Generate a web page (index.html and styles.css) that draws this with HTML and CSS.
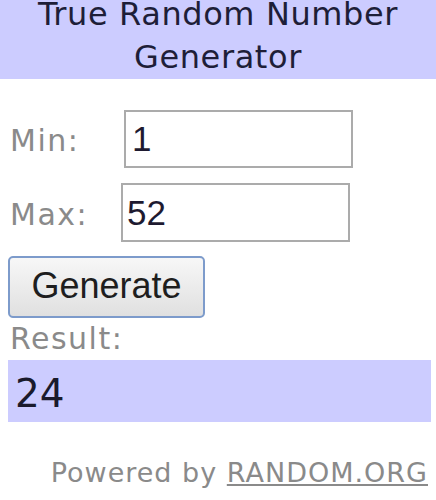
FILE: index.html
```html
<!DOCTYPE html>
<html>
<head>
<meta charset="utf-8">
<link rel="stylesheet" href="styles.css">
</head>
<body>
<div class="widget">
  <div class="header">
    <div class="title title-1">True Random Number</div>
    <div class="title title-2">Generator</div>
  </div>
  <div class="form">
    <div class="row row-min">
      <span class="label label-min">Min:</span>
      <input class="field field-min" type="text" value="1">
    </div>
    <div class="row row-max">
      <span class="label label-max">Max:</span>
      <input class="field field-max" type="text" value="52">
    </div>
    <button class="btn" type="button">Generate</button>
    <div class="result-label">Result:</div>
    <div class="result">24</div>
  </div>
  <div class="powered">Powered by <a class="link" href="#">RANDOM.ORG</a></div>
</div>
</body>
</html>
```
FILE: styles.css
```css
html, body {
  margin: 0;
  padding: 0;
  background: #ffffff;
}
.widget {
  width: 436px;
  height: 500px;
  overflow: hidden;
  font-family: "DejaVu Sans", Verdana, sans-serif;
}
.header {
  height: 79px;
  background: #ccccff;
  overflow: hidden;
}
.title {
  text-align: center;
  font-size: 32px;
  letter-spacing: 0.6px;
  color: #1e1e38;
}
.title-1 {
  line-height: 29px;
}
.title-2 {
  padding-top: 6px;
  line-height: 44px;
}
.form {
  padding: 0 5px 0 8px;
}
.row {
  display: flex;
  align-items: baseline;
}
.row-min {
  margin-top: 31px;
}
.row-max {
  margin-top: 15px;
}
.label {
  font-size: 30px;
  color: #8a8a8a;
  padding-left: 2px;
  letter-spacing: 1.5px;
}
.label-min {
  width: 114px;
}
.label-max {
  width: 111px;
}
.field {
  box-sizing: border-box;
  width: 229px;
  height: 58px;
  margin: 0;
  border: 2px solid #ababab;
  padding: 0 0 0 6px;
  font-family: "Liberation Sans", Arial, sans-serif;
  font-size: 35px;
  color: #1e1a30;
  background: #ffffff;
  outline: none;
}
.field-max {
  height: 59px;
  padding-left: 4px;
}
.btn {
  display: block;
  box-sizing: border-box;
  width: 197px;
  height: 62px;
  margin: 14px 0 0 0;
  padding: 0 0 2px 0;
  border: 2px solid #7d9bcb;
  border-radius: 5px;
  background: linear-gradient(#f7f7f7, #e0e0e0);
  font-family: "Liberation Sans", Arial, sans-serif;
  font-size: 36px;
  color: #1e1e1e;
  text-align: center;
}
.result-label {
  margin-top: 4px;
  height: 34px;
  line-height: 34px;
  font-size: 30px;
  color: #8a8a8a;
  padding-left: 2px;
  letter-spacing: 1.5px;
}
.result {
  box-sizing: border-box;
  margin-top: 4px;
  height: 62px;
  padding: 5px 0 0 7px;
  line-height: 57px;
  background: #ccccff;
  font-size: 39px;
  color: #1a1a2c;
}
.powered {
  margin-top: 34px;
  padding-right: 8px;
  text-align: right;
  font-size: 27px;
  line-height: 34px;
  color: #8a8a8a;
  letter-spacing: 1px;
}
.link {
  color: #8a8a8a;
  text-decoration: underline;
}
```
